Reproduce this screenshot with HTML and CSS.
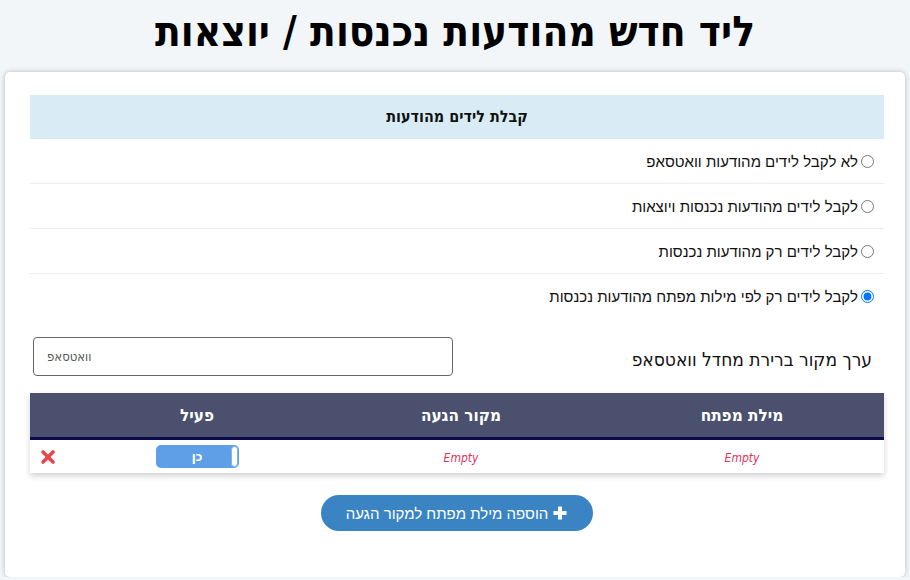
FILE: index.html
```html
<!DOCTYPE html>
<html lang="he" dir="rtl">
<head>
    <meta charset="UTF-8">
    <meta name="viewport" content="width=device-width, initial-scale=1.0">
    <title>ליד חדש מהודעות נכנסות / יוצאות</title>
    <link rel="stylesheet" href="styles.css">
</head>
<body>
    <h1 class="page-title">ליד חדש מהודעות נכנסות / יוצאות</h1>
    <div class="card">
        <div class="section-head">קבלת לידים מהודעות</div>
        <div class="options">
            <label class="option"><input type="radio" name="mode"> לא לקבל לידים מהודעות וואטסאפ</label>
            <label class="option"><input type="radio" name="mode"> לקבל לידים מהודעות נכנסות ויוצאות</label>
            <label class="option"><input type="radio" name="mode"> לקבל לידים רק מהודעות נכנסות</label>
            <label class="option"><input type="radio" name="mode" checked> לקבל לידים רק לפי מילות מפתח מהודעות נכנסות</label>
        </div>
        <div class="source-row">
            <label class="source-label" for="source">ערך מקור ברירת מחדל וואטסאפ</label>
            <input type="text" class="source-input" id="source" value="וואטסאפ">
        </div>
        <table class="keywords">
            <thead>
                <tr>
                    <th class="col-key">מילת מפתח</th>
                    <th class="col-src">מקור הגעה</th>
                    <th class="col-active">פעיל</th>
                    <th class="col-del"></th>
                </tr>
            </thead>
            <tbody>
                <tr>
                    <td><span class="empty">Empty</span></td>
                    <td><span class="empty">Empty</span></td>
                    <td><span class="toggle">כן<span class="knob"></span></span></td>
                    <td class="del">
                        <svg width="16" height="16" viewBox="0 0 16 16">
                            <path d="M3 3 L13 13 M13 3 L3 13" stroke="#e8474b" stroke-width="3.6" stroke-linecap="round"/>
                        </svg>
                    </td>
                </tr>
            </tbody>
        </table>
        <div class="actions">
            <button class="add-btn">
                <svg width="16" height="16" viewBox="0 0 16 16">
                    <path d="M8 1.5 V14.5 M1.5 8 H14.5" stroke="#fff" stroke-width="4"/>
                </svg>
                הוספה מילת מפתח למקור הגעה
            </button>
        </div>
    </div>
</body>
</html>
```

FILE: styles.css
```css
body {
    margin: 0;
    padding: 0 5px;
    background-color: #f3f6f9;
    font-family: "Liberation Sans", Arial, sans-serif;
    color: #111;
}
.page-title {
    margin: 0;
    padding-top: 8px;
    height: 72px;
    box-sizing: border-box;
    text-align: center;
    font-family: "DejaVu Sans Condensed", "DejaVu Sans", sans-serif;
    font-weight: 900;
    font-size: 42px;
    line-height: 48px;
    color: #000;
}
.card {
    background-color: #fff;
    border-radius: 5px;
    box-shadow: 0 0 5px rgba(0,0,0,0.25);
    padding: 23px 21px 46px 25px;
}
.section-head {
    background-color: #d9ecf5;
    height: 44px;
    line-height: 44px;
    text-align: center;
    font-family: "DejaVu Sans Condensed", "DejaVu Sans", sans-serif;
    font-weight: bold;
    font-size: 16px;
}
.options {
    display: flex;
    flex-direction: column;
}
.option {
    display: flex;
    align-items: center;
    gap: 3px;
    height: 45px;
    padding-right: 10px;
    border-bottom: 1px solid #eceef0;
    box-sizing: border-box;
    font-size: 15px;
}
.option:last-child {
    border-bottom: none;
}
.option input {
    margin: 0;
    width: 13px;
    height: 13px;
}
.source-row {
    display: flex;
    align-items: center;
    justify-content: space-between;
    margin-top: 18px;
    padding-right: 12px;
    padding-left: 3px;
}
.source-label {
    font-family: "DejaVu Sans Condensed", "DejaVu Sans", sans-serif;
    font-weight: 300;
    font-size: 19px;
    padding-top: 4px;
}
.source-input {
    width: 420px;
    height: 39px;
    box-sizing: border-box;
    border: 1px solid #666;
    border-radius: 4px;
    padding: 0 13px;
    text-align: left;
    font-family: "DejaVu Sans Condensed", "DejaVu Sans", sans-serif;
    font-size: 13px;
    color: #555;
}
.keywords {
    width: 100%;
    margin-top: 17px;
    border-collapse: collapse;
    box-shadow: 0 3px 6px rgba(0,0,0,0.18);
}
.keywords th {
    background-color: #4a506d;
    color: #fff;
    height: 44px;
    border-bottom: 3px solid #0b0b4b;
    font-family: "DejaVu Sans Condensed", "DejaVu Sans", sans-serif;
    font-weight: bold;
    font-size: 17px;
    padding: 0;
}
.col-key { width: 284px; }
.col-src { width: 278px; }
.col-active { width: 250px; }
.keywords td {
    height: 33px;
    text-align: center;
    padding: 0;
}
.empty {
    font-family: "DejaVu Sans Condensed", "DejaVu Sans", sans-serif;
    font-style: italic;
    font-size: 12px;
    color: #e0335a;
}
.toggle {
    position: relative;
    display: inline-block;
    width: 83px;
    height: 23px;
    line-height: 23px;
    border-radius: 5px;
    background-color: #5f9fe8;
    color: #fff;
    font-family: "DejaVu Sans Condensed", "DejaVu Sans", sans-serif;
    font-weight: bold;
    font-size: 13px;
    vertical-align: middle;
}
.knob {
    position: absolute;
    right: 1px;
    top: 1px;
    width: 5px;
    height: 19px;
    border: 1px solid #7fb3ee;
    border-radius: 4px;
    background-color: #fff;
}
.keywords td.del {
    text-align: left;
    padding-left: 10px;
}
.del svg {
    display: block;
    margin-right: auto;
}
.actions {
    display: flex;
    justify-content: center;
    margin-top: 22px;
}
.add-btn {
    display: flex;
    align-items: center;
    gap: 4px;
    height: 36px;
    padding: 0 25px;
    border: none;
    border-radius: 18px;
    background-color: #3b84c4;
    color: #fff;
    font-family: "Liberation Sans", Arial, sans-serif;
    font-size: 15px;
    cursor: pointer;
}
```
